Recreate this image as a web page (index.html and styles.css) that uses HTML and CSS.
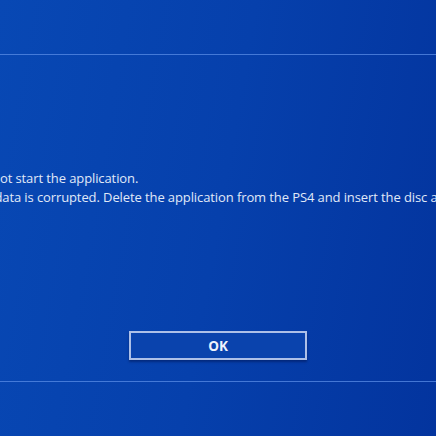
FILE: index.html
```html
<!DOCTYPE html>
<html>
<head>
<meta charset="utf-8">
<link rel="stylesheet" href="styles.css">
</head>
<body>
<div class="screen">
  <div class="header"></div>
  <div class="body">
    <div class="message">
      <p class="line">Cannot start the application.</p>
      <p class="line">The data is corrupted. Delete the application from the PS4 and insert the disc again.</p>
    </div>
    <div class="actions">
      <button class="ok">OK</button>
    </div>
  </div>
  <div class="footer"></div>
</div>
</body>
</html>
```
FILE: styles.css
```css
html, body {
  margin: 0;
  padding: 0;
  width: 436px;
  height: 436px;
  overflow: hidden;
}
.screen {
  width: 436px;
  height: 436px;
  display: flex;
  flex-direction: column;
  background: linear-gradient(100deg, #0848b4 0%, #0640ac 50%, #03349e 100%);
  font-family: "Open Sans", "Noto Sans", sans-serif;
  overflow: hidden;
}
.header {
  height: 54px;
  border-bottom: 1px solid rgba(90, 140, 230, 0.75);
  flex: none;
}
.body {
  height: 326px;
  flex: none;
  display: flex;
  flex-direction: column;
  border-bottom: 1px solid rgba(90, 140, 230, 0.75);
}
.message {
  margin-top: 114px;
  margin-left: -31px;
  white-space: nowrap;
  color: #e0e9f8;
  font-size: 13px;
  letter-spacing: -0.1px;
  line-height: 19px;
}
.line {
  margin: 0;
}
.actions {
  margin-top: 124px;
  padding-left: 129px;
}
.ok {
  width: 178px;
  height: 29px;
  box-sizing: border-box;
  border: 2px solid #adc0e8;
  background: #0a43ad;
  color: #eef3fc;
  font-family: "Open Sans", "Noto Sans", sans-serif;
  font-weight: 700;
  font-size: 13.5px;
  padding: 0;
  box-shadow: 0 2px 2px rgba(0, 20, 80, 0.5);
}
.footer {
  flex: 1;
}
```
